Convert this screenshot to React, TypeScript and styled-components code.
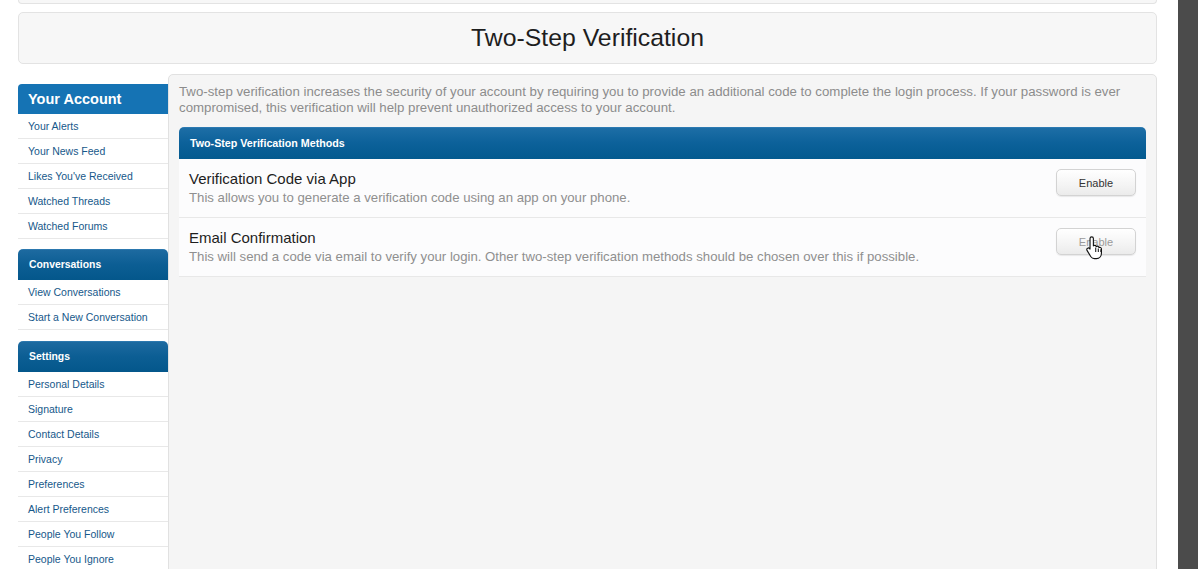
import React from "react";
import styled, { createGlobalStyle } from "styled-components";

const GlobalStyle = createGlobalStyle`
  html, body {
    margin: 0;
    padding: 0;
    background: #ffffff;
    font-family: "Liberation Sans", Arial, sans-serif;
  }
  * {
    box-sizing: border-box;
  }
`;

const Frame = styled.div`
  display: flex;
  height: 569px;
  overflow: hidden;
`;

const Page = styled.div`
  flex: 1;
  display: flex;
  flex-direction: column;
  padding: 0 21px 0 18px;
`;

const Strip = styled.div`
  width: 20px;
  flex-shrink: 0;
  background: #4b4b4b;
`;

const TopStub = styled.div`
  flex-shrink: 0;
  height: 4px;
  background: #f7f7f7;
  border: 1px solid #e3e3e3;
  border-top: none;
  border-radius: 0 0 5px 5px;
`;

const TitleBar = styled.div`
  flex-shrink: 0;
  margin-top: 8px;
  height: 52px;
  background: #f7f7f7;
  border: 1px solid #e3e3e3;
  border-radius: 5px;
  display: flex;
  align-items: center;
  justify-content: center;
`;

const Title = styled.h1`
  margin: 0;
  font-size: 24.8px;
  font-weight: 400;
  color: #1e1e1e;
`;

const Layout = styled.div`
  flex-shrink: 0;
  margin-top: 10px;
  display: flex;
  align-items: flex-start;
`;

const Sidebar = styled.div`
  width: 150px;
  margin-top: 10px;
  display: flex;
  flex-direction: column;
  gap: 10px;
`;

const Section = styled.div<{ $gapAfter?: number }>`
  margin-bottom: ${(p) => p.$gapAfter ?? 0}px;
`;

const SectionHeader = styled.div<{ $primary?: boolean }>`
  height: ${(p) => (p.$primary ? 30 : 31)}px;
  display: flex;
  align-items: center;
  padding-left: ${(p) => (p.$primary ? 10 : 11)}px;
  color: #ffffff;
  font-weight: 700;
  font-size: ${(p) => (p.$primary ? "14.5px" : "10.4px")};
  border-radius: ${(p) => (p.$primary ? "4px 0 0 0" : "5px 5px 0 0")};
  background: ${(p) =>
    p.$primary
      ? "#1573b4"
      : "linear-gradient(to bottom, #3a86bd 0, #1d6aa0 1px, #0c5e94 50%, #04578b 100%)"};
`;

const NavItem = styled.a`
  display: flex;
  align-items: center;
  height: 25px;
  padding-left: 10px;
  font-size: 10.5px;
  color: #16588a;
  text-decoration: none;
  background: #ffffff;
  border-bottom: 1px solid #e8e8e8;
`;

const Main = styled.div`
  flex: 1;
  min-height: 520px;
  background: #f5f5f5;
  border: 1px solid #e1e1e1;
  border-radius: 5px 5px 0 0;
  padding: 9px 10px;
`;

const Intro = styled.p`
  margin: 0 0 11px;
  font-size: 13.25px;
  line-height: 16px;
  color: #8c8c8c;
`;

const MethodsHeader = styled.div`
  height: 32px;
  display: flex;
  align-items: center;
  padding-left: 11px;
  color: #ffffff;
  font-weight: 700;
  font-size: 10.7px;
  border-radius: 5px 5px 0 0;
  background: linear-gradient(to bottom, #3a86bd 0, #1d6ea6 1px, #0c619a 50%, #035a8f 100%);
`;

const MethodRow = styled.div`
  height: 59px;
  display: flex;
  align-items: flex-start;
  padding: 0 10px;
  background: #fcfcfd;
  border-bottom: 1px solid #e8e8e8;
`;

const MethodText = styled.div`
  flex: 1;
  display: flex;
  flex-direction: column;
  gap: 3px;
  padding-top: 11px;
`;

const MethodName = styled.div`
  font-size: 15px;
  color: #1e1e1e;
`;

const MethodDesc = styled.div`
  font-size: 13.2px;
  color: #8f8f8f;
`;

const ButtonWrap = styled.div`
  position: relative;
  display: flex;
  margin-top: 10px;
`;

const Button = styled.button<{ $muted?: boolean }>`
  width: 80px;
  height: 27px;
  font-family: inherit;
  font-size: 11px;
  color: ${(p) => (p.$muted ? "#9a9a9a" : "#333333")};
  background: linear-gradient(to bottom, #ffffff 0%, #f4f4f4 60%, #ebebeb 100%);
  border: 1px solid #d3d3d3;
  border-radius: 5px;
  box-shadow: 0 1px 1px rgba(0, 0, 0, 0.08);
  cursor: pointer;
`;

const Cursor = styled.svg`
  position: absolute;
  left: 29px;
  top: 7px;
  width: 19px;
  height: 25px;
`;

const HandCursor = () => (
  <Cursor viewBox="0 0 17 22">
    <path
      d="M6 1.5c.8 0 1.5.7 1.5 1.5v6.5l.5-.3c.8-.3 1.6 0 1.9.6l.2.4.4-.2c.8-.3 1.6 0 1.9.7l.1.3.4-.1c.9-.2 1.7.4 1.8 1.3V16c0 2.5-1.6 5-4.5 5H8.5c-1.5 0-2.6-.8-3.4-2L1.8 13.6c-.4-.7-.2-1.5.5-1.9.6-.4 1.4-.3 1.9.3l.3.4V3c0-.8.7-1.5 1.5-1.5z"
      fill="#ffffff"
      stroke="#111111"
      strokeWidth="1"
      strokeLinejoin="round"
    />
    <path d="M9.6 11v4M11.9 12v3M14.2 12.5v2.5" stroke="#111111" strokeWidth="0.9" fill="none" />
  </Cursor>
);

const sections = [
  {
    title: "Your Account",
    primary: true,
    items: ["Your Alerts", "Your News Feed", "Likes You've Received", "Watched Threads", "Watched Forums"],
  },
  {
    title: "Conversations",
    items: ["View Conversations", "Start a New Conversation"],
    gapAfter: 1,
  },
  {
    title: "Settings",
    items: [
      "Personal Details",
      "Signature",
      "Contact Details",
      "Privacy",
      "Preferences",
      "Alert Preferences",
      "People You Follow",
      "People You Ignore",
    ],
  },
];

const methods = [
  {
    name: "Verification Code via App",
    desc: "This allows you to generate a verification code using an app on your phone.",
  },
  {
    name: "Email Confirmation",
    desc: "This will send a code via email to verify your login. Other two-step verification methods should be chosen over this if possible.",
    hover: true,
  },
];

export default function App() {
  return (
    <Frame>
      <GlobalStyle />
      <Page>
        <TopStub />
        <TitleBar>
          <Title>Two-Step Verification</Title>
        </TitleBar>
        <Layout>
          <Sidebar>
            {sections.map((s) => (
              <Section key={s.title} $gapAfter={s.gapAfter}>
                <SectionHeader $primary={s.primary}>{s.title}</SectionHeader>
                {s.items.map((item) => (
                  <NavItem key={item} href="#">
                    {item}
                  </NavItem>
                ))}
              </Section>
            ))}
          </Sidebar>
          <Main>
            <Intro>
              Two-step verification increases the security of your account by requiring you to provide an
              additional code to complete the login process. If your password is ever compromised, this
              verification will help prevent unauthorized access to your account.
            </Intro>
            <MethodsHeader>Two-Step Verification Methods</MethodsHeader>
            {methods.map((m) => (
              <MethodRow key={m.name}>
                <MethodText>
                  <MethodName>{m.name}</MethodName>
                  <MethodDesc>{m.desc}</MethodDesc>
                </MethodText>
                <ButtonWrap>
                  <Button $muted={m.hover}>Enable</Button>
                  {m.hover && <HandCursor />}
                </ButtonWrap>
              </MethodRow>
            ))}
          </Main>
        </Layout>
      </Page>
      <Strip />
    </Frame>
  );
}
